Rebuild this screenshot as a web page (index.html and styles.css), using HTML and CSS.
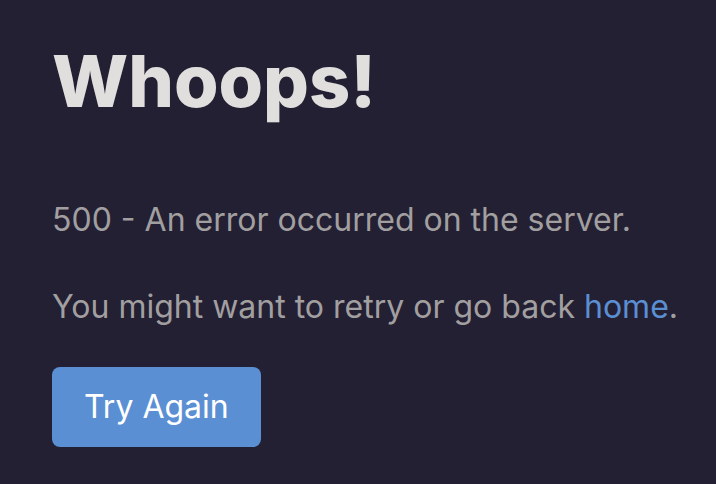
FILE: index.html
```html
<!DOCTYPE html>
<html lang="en">
<head>
<meta charset="utf-8">
<title>Whoops!</title>
<link rel="stylesheet" href="styles.css">
</head>
<body>
<main class="error-page">
  <h1 class="title">Whoops!</h1>
  <p class="message">500 - An error occurred on the server.</p>
  <p class="message">You might want to retry or go back <a class="link" href="#">home</a>.</p>
  <button class="btn" type="button">Try Again</button>
</main>
</body>
</html>
```

FILE: styles.css
```css
html, body {
  margin: 0;
  padding: 0;
  background: #242033;
  height: 100%;
}

body {
  font-family: Inter, "Noto Sans", sans-serif;
}

.error-page {
  display: flex;
  flex-direction: column;
  align-items: flex-start;
  padding: 45px 0 0 52px;
}

.title {
  margin: 0 0 79px;
  font-size: 72px;
  line-height: 72px;
  font-weight: 800;
  color: #e0dfde;
  letter-spacing: 0;
}

.message {
  margin: 0 0 39px;
  font-size: 32px;
  line-height: 48px;
  color: #a19fa0;
  white-space: nowrap;
}

.message:last-of-type {
  margin-bottom: 36px;
}

.link {
  color: #5b8fd4;
  text-decoration: none;
}

.btn {
  font-family: inherit;
  font-size: 32px;
  line-height: 48px;
  padding: 16px 32px;
  border: 0;
  border-radius: 8px;
  background: #5b8fd4;
  color: #ffffff;
  cursor: pointer;
}
```
